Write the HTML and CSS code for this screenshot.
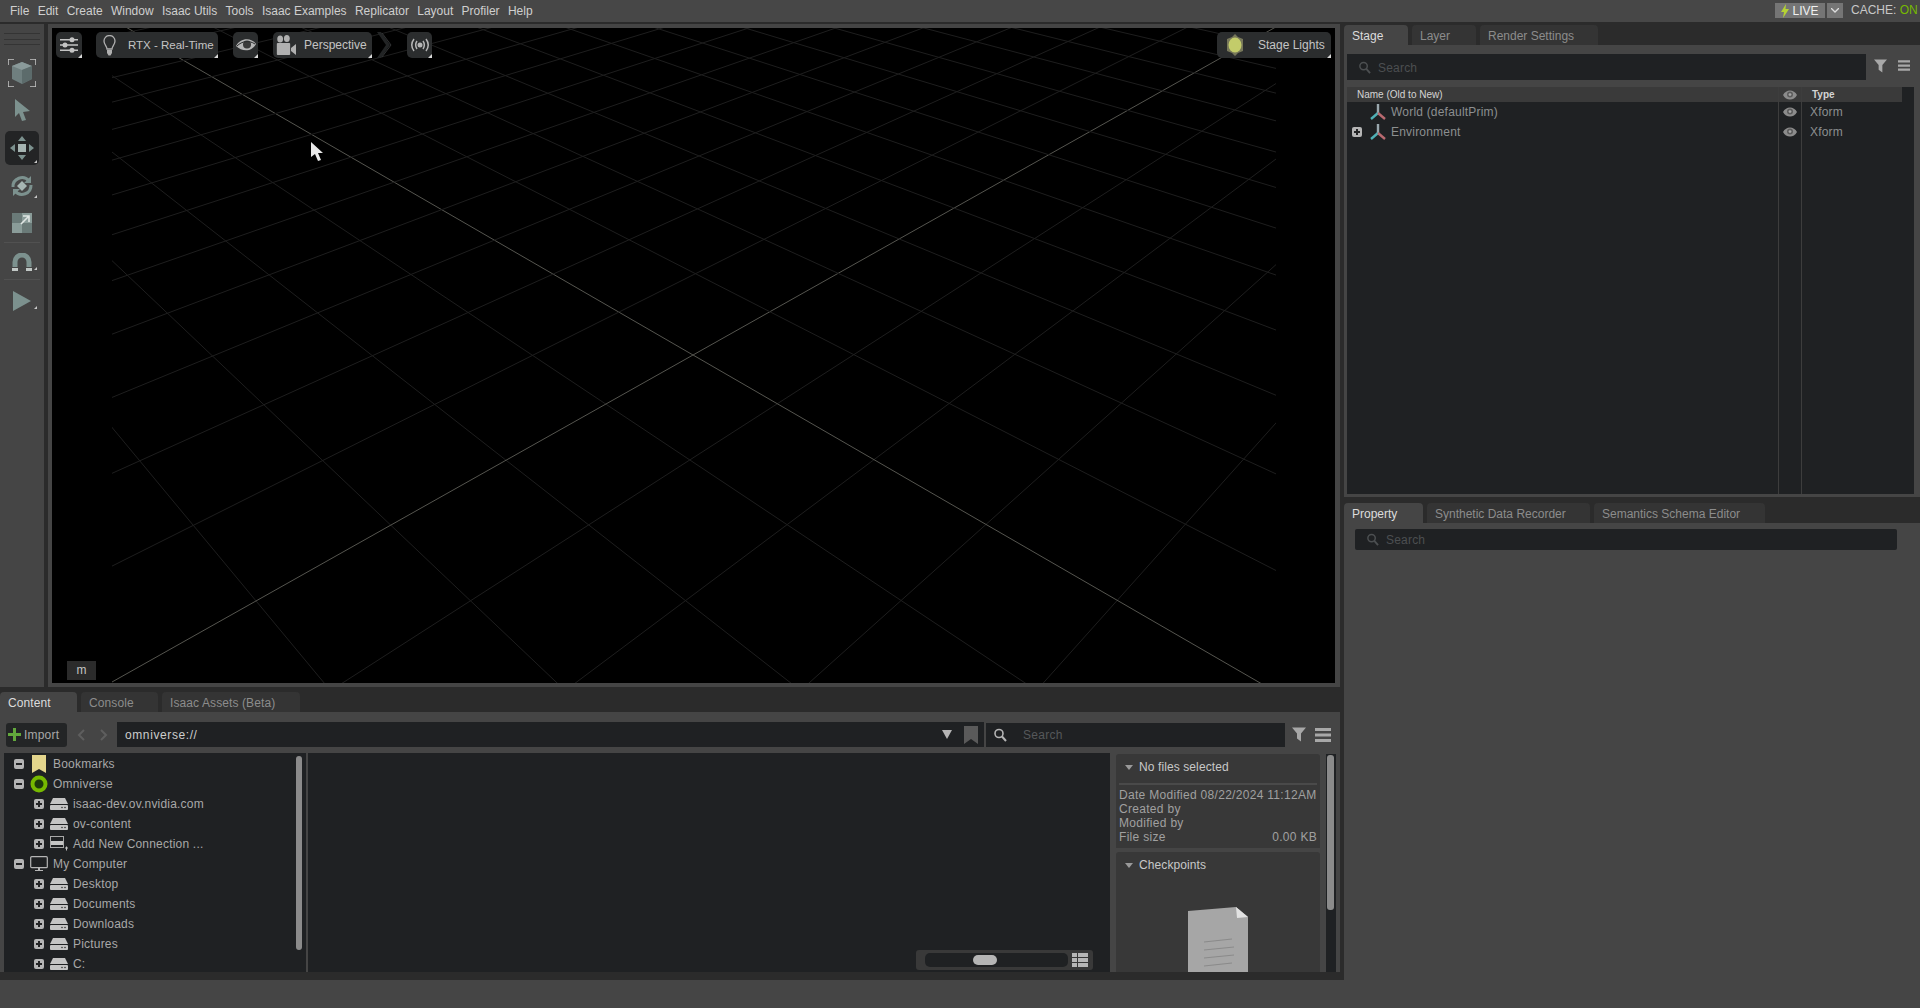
FILE: index.html
```html
<!DOCTYPE html>
<html lang="en">
<head>
  <meta charset="UTF-8">
  <title>Isaac Sim</title>
  <link rel="stylesheet" href="styles.css">
</head>
<body>
  <svg class="defs" width="0" height="0">
    <symbol id="i-drive" viewBox="0 0 18 12">
      <path d="M3 0h12l3 6H0z" fill="#c4c4c4"/>
      <rect y="7" width="18" height="5" rx="1" fill="#c4c4c4"/>
      <circle cx="12" cy="9.5" r=".8" fill="#333"/><circle cx="15" cy="9.5" r=".8" fill="#333"/>
    </symbol>
    <symbol id="i-xform" viewBox="0 0 16 18">
      <path d="M8 1v9" stroke="#9aa7ad" stroke-width="2.4" fill="none"/>
      <path d="M8 10l-7 6" stroke="#4fb0b5" stroke-width="2.4" fill="none"/>
      <path d="M8 10l7 6" stroke="#b8696f" stroke-width="2.4" fill="none"/>
    </symbol>
    <symbol id="i-eye" viewBox="0 0 14 12">
      <path d="M0 6c3-6 11-6 14 0-3 6-11 6-14 0z" fill="#8c8c8c"/>
      <circle cx="7" cy="5.6" r="3" fill="#5c5c5c"/>
      <circle cx="7" cy="5.6" r="1.4" fill="#a5a5a5"/>
    </symbol>
    <symbol id="i-search" viewBox="0 0 14 14">
      <circle cx="6" cy="5.5" r="4" fill="none" stroke="currentColor" stroke-width="1.6"/>
      <path d="M9 8.5l4 4.5" stroke="currentColor" stroke-width="2"/>
    </symbol>
    <symbol id="i-filter" viewBox="0 0 14 14">
      <path d="M0 0h14L9 6v8L5 11V6z" fill="#a8a8a8"/>
    </symbol>
    <symbol id="i-menu" viewBox="0 0 16 14">
      <path d="M0 0h16v3H0zM0 5.5h16v3H0zM0 11h16v3H0z" fill="#a8a8a8"/>
    </symbol>
  </svg>

  <div class="app">
    <header class="menubar">
      <nav class="menu">
        <span>File</span><span>Edit</span><span>Create</span><span>Window</span><span>Isaac Utils</span><span>Tools</span><span>Isaac Examples</span><span>Replicator</span><span>Layout</span><span>Profiler</span><span>Help</span>
      </nav>
      <div class="live-status">
        <div class="live-btn">
          <svg width="8" height="14" viewBox="0 0 8 14"><path d="M5 0L0 8h3l-1 6 6-9H4.500z" fill="#b5d334"/></svg>
          <span>LIVE</span>
        </div>
        <div class="live-drop">
          <svg width="8" height="5" viewBox="0 0 8 5"><path d="M0 0l4 4 4-4" fill="none" stroke="#ddd" stroke-width="1.300"/></svg>
        </div>
        <div class="cache">CACHE: <span class="on">ON</span></div>
      </div>
    </header>

    <div class="workspace">
      <div class="left-col">
        <div class="viewport-row">
          <aside class="toolbar">
            <div class="grip"></div>
            <div class="tool tool-select">
              <svg width="28" height="28" viewBox="0 0 28 28">
                <path d="M0 6V0h6M22 0h6v6M0 22v6h6M22 28h6v-6" fill="none" stroke="#c6c6c6" stroke-width="1.500"/>
                <path d="M14 3l10 4v13l-10 5-10-5V7z" fill="#6f7f7f"/>
                <path d="M14 3l10 4-10 4-10-4z" fill="#8a9a9a"/>
                <path d="M14 11l10-4v13l-10 5z" fill="#5c6b6b"/>
              </svg>
            </div>
            <div class="tool tool-arrow">
              <svg width="17" height="22" viewBox="0 0 17 22"><path d="M1 0l15 12-7 1 3 8-4 1-3-8-4 4z" fill="#7c918e"/></svg>
            </div>
            <div class="tool tool-move">
              <svg width="24" height="24" viewBox="0 0 24 24" fill="#7c918e">
                <rect x="8" y="8" width="8" height="8" fill="#a6b5b2"/>
                <path d="M12 0l4 5H8zM12 24l-4-5h8zM0 12l5-4v8zM24 12l-5 4V8z"/>
              </svg>
            </div>
            <div class="tool tool-rotate">
              <svg width="24" height="24" viewBox="0 0 24 24">
                <path d="M3 13a9 9 0 0 1 16-6M21 11a9 9 0 0 1-16 6" fill="none" stroke="#7c918e" stroke-width="3"/>
                <path d="M21 2v7h-7zM3 22v-7h7z" fill="#7c918e"/>
                <path d="M12 7l5 5-5 5-5-5z" fill="#a6b5b2"/>
              </svg>
            </div>
            <div class="tool tool-scale">
              <svg width="20" height="20" viewBox="0 0 20 20">
                <rect width="20" height="20" fill="#8a9c99"/>
                <rect width="10" height="10" fill="#6a7a78"/>
                <rect x="10" y="10" width="10" height="10" fill="#6a7a78"/>
                <path d="M9 11l8-8M11 3h6v6" fill="none" stroke="#e0e6e4" stroke-width="1.600"/>
              </svg>
            </div>
            <div class="tool-sep"></div>
            <div class="tool tool-magnet">
              <svg width="20" height="19" viewBox="0 0 20 19">
                <path d="M3 14V9a7 7 0 0 1 14 0v5" fill="none" stroke="#7c918e" stroke-width="5"/>
                <path d="M0 15h6v3H0zM14 15h6v3h-6z" fill="#c2c8c6"/>
              </svg>
            </div>
            <div class="tool-sep"></div>
            <div class="tool tool-play">
              <svg width="18" height="20" viewBox="0 0 18 20"><path d="M0 0l18 10L0 20z" fill="#7c918e"/></svg>
            </div>
          </aside>

          <div class="viewport-frame">
            <main class="viewport">
              <svg id="grid" class="grid" viewBox="52 28 1283 655">
                <clipPath id="grid-clip"><rect x="112" y="28" width="1164" height="655"/></clipPath>
                <g id="grid-lines" clip-path="url(#grid-clip)"></g>
              </svg>

              <div class="vp-toolbar">
                <div class="vp-btn vp-settings">
                  <svg width="18" height="16" viewBox="0 0 18 16" fill="#c4c4c4">
                    <path d="M0 2h18v1.600H0zM0 7.200h18v1.600H0zM0 12.400h18V14H0z"/>
                    <circle cx="12" cy="2.800" r="2.500"/><circle cx="5" cy="8" r="2.500"/><circle cx="12" cy="13.200" r="2.500"/>
                  </svg>
                </div>
                <div class="vp-btn vp-rtx">
                  <svg width="13" height="21" viewBox="0 0 13 21">
                    <path d="M4 14c0-3-3-4-3-8a5.500 5.500 0 0 1 11 0c0 4-3 5-3 8z" fill="none" stroke="#b0b0b0" stroke-width="1.300"/>
                    <path d="M4 15h5v3l-1.500 2.500h-2L4 18z" fill="#b0b0b0"/>
                  </svg>
                  <span>RTX - Real-Time</span>
                </div>
                <div class="vp-btn vp-eye">
                  <svg width="20" height="14" viewBox="0 0 20 14">
                    <path d="M0 8C4 0 15-1 20 6 16 14 6 14 0 8z" fill="#b5b5b5"/>
                    <circle cx="11" cy="6.500" r="4" fill="#3a3a3a"/>
                    <path d="M1 8c5-5 12-6 18-2" stroke="#2b2d2e" stroke-width="1" fill="none"/>
                  </svg>
                </div>
                <div class="vp-btn vp-persp">
                  <svg width="20" height="20" viewBox="0 0 24 20" preserveAspectRatio="none" fill="#b0b0b0">
                    <circle cx="5" cy="4" r="3.500"/><circle cx="13" cy="3.500" r="3.500"/>
                    <rect x="1" y="8" width="16" height="12" rx="1"/>
                    <path d="M18 13l6-4v11l-6-4z"/>
                  </svg>
                  <span>Perspective</span>
                </div>
                <svg class="vp-chevron" width="15" height="26" viewBox="0 0 15 26">
                  <path d="M0 0h4l9 13-9 13H0l9-13z" fill="#222425"/>
                  <path d="M5 1l9 12-9 12" fill="none" stroke="#333536"/>
                </svg>
                <div class="vp-btn vp-cast">
                  <svg width="22" height="14" viewBox="0 0 22 14" fill="none" stroke="#b5b5b5" stroke-width="1.500">
                    <path d="M5 1C2 5 2 9 5 13M8 3c-2 3-2 5 0 8M17 1c3 4 3 8 0 12M14 3c2 3 2 5 0 8"/>
                    <circle cx="11" cy="7" r="2.500" fill="#b5b5b5" stroke="none"/>
                  </svg>
                </div>
              </div>

              <div class="vp-btn vp-lights">
                <svg width="20" height="22" viewBox="0 0 20 22">
                  <path d="M10 0l3 3 5 2v12l-5 2-3 3-3-3-5-2V5l5-2z" fill="#77775a"/>
                  <ellipse cx="10" cy="11" rx="6.500" ry="7.500" fill="#c3cc6a"/>
                </svg>
                <span>Stage Lights</span>
              </div>

              <div class="vp-scale">m</div>

              <svg class="cursor" width="13" height="20" viewBox="0 0 13 20">
                <path d="M1 0v15l4-3 3 7 3-1-3-7h5z" fill="#e8e8e8"/>
              </svg>
            </main>
          </div>
        </div>

        <section class="content-panel">
          <div class="tabs tabs-content">
            <div class="tab active w-content">Content</div>
            <div class="tab w-console">Console</div>
            <div class="tab w-assets">Isaac Assets (Beta)</div>
          </div>
          <div class="content-body">
            <div class="content-bar">
              <div class="import-btn">
                <svg width="13" height="13" viewBox="0 0 13 13"><path d="M5 0h3v5h5v3H8v5H5V8H0V5h5z" fill="#62a83c"/></svg>
                <span>Import</span>
              </div>
              <div class="nav-arrows">
                <svg width="8" height="12" viewBox="0 0 8 12"><path d="M7 1L2 6l5 5" fill="none" stroke="#5e5e5e" stroke-width="2"/></svg>
                <svg width="8" height="12" viewBox="0 0 8 12"><path d="M1 1l5 5-5 5" fill="none" stroke="#5e5e5e" stroke-width="2"/></svg>
              </div>
              <div class="address">
                <span>omniverse://</span>
                <svg class="addr-drop" width="10" height="9" viewBox="0 0 10 9"><path d="M0 0h10L5 9z" fill="#b5b5b5"/></svg>
                <svg class="addr-mark" width="14" height="18" viewBox="0 0 14 18"><path d="M0 0h14v18l-7-5-7 5z" fill="#5a5a5a"/></svg>
              </div>
              <div class="content-search">
                <svg class="ic-search-lg" width="14" height="14"><use href="#i-search"/></svg>
                <span>Search</span>
              </div>
              <svg class="ic-filter" width="14" height="15"><use href="#i-filter"/></svg>
              <svg class="ic-menu" width="16" height="14"><use href="#i-menu"/></svg>
            </div>

            <div class="content-main">
              <div class="tree-pane">
                <div class="tree-row lvl1"><i class="exp minus"></i>
                  <svg class="tree-ic" width="18" height="18" viewBox="0 0 18 18"><path d="M2 0h14v18l-7-4-7 4z" fill="#e3d58c"/></svg>
                  <span>Bookmarks</span></div>
                <div class="tree-row lvl1"><i class="exp minus"></i>
                  <svg class="tree-ic" width="18" height="18" viewBox="0 0 18 18"><circle cx="9" cy="9" r="6.500" fill="#1d3a0c" stroke="#76b900" stroke-width="4"/></svg>
                  <span>Omniverse</span></div>
                <div class="tree-row lvl2"><i class="exp plus"></i><svg class="tree-ic" width="18" height="12"><use href="#i-drive"/></svg><span>isaac-dev.ov.nvidia.com</span></div>
                <div class="tree-row lvl2"><i class="exp plus"></i><svg class="tree-ic" width="18" height="12"><use href="#i-drive"/></svg><span>ov-content</span></div>
                <div class="tree-row lvl2"><i class="exp plus"></i>
                  <svg class="tree-ic" width="18" height="16" viewBox="0 0 18 16">
                    <rect x=".5" y=".5" width="13" height="11" fill="none" stroke="#a8a8a8"/>
                    <rect x="1" y="5" width="12" height="4" fill="#c4c4c4"/>
                    <path d="M15 12h3M16.500 10.500v4" stroke="#c4c4c4"/>
                  </svg>
                  <span>Add New Connection ...</span></div>
                <div class="tree-row lvl1"><i class="exp minus"></i>
                  <svg class="tree-ic" width="18" height="16" viewBox="0 0 18 16">
                    <rect x=".7" y=".7" width="16.600" height="11" rx="1" fill="none" stroke="#b5b5b5" stroke-width="1.200"/>
                    <path d="M8 12h2v2h3v1H5v-1h3z" fill="#b5b5b5"/>
                  </svg>
                  <span>My Computer</span></div>
                <div class="tree-row lvl2"><i class="exp plus"></i><svg class="tree-ic" width="18" height="12"><use href="#i-drive"/></svg><span>Desktop</span></div>
                <div class="tree-row lvl2"><i class="exp plus"></i><svg class="tree-ic" width="18" height="12"><use href="#i-drive"/></svg><span>Documents</span></div>
                <div class="tree-row lvl2"><i class="exp plus"></i><svg class="tree-ic" width="18" height="12"><use href="#i-drive"/></svg><span>Downloads</span></div>
                <div class="tree-row lvl2"><i class="exp plus"></i><svg class="tree-ic" width="18" height="12"><use href="#i-drive"/></svg><span>Pictures</span></div>
                <div class="tree-row lvl2"><i class="exp plus"></i><svg class="tree-ic" width="18" height="12"><use href="#i-drive"/></svg><span>C:</span></div>
                <div class="scrollbar tree-scroll"></div>
              </div>

              <div class="file-pane">
                <div class="zoom-bar">
                  <div class="zoom-track"><div class="zoom-thumb"></div></div>
                  <svg width="16" height="14" viewBox="0 0 16 14" fill="#b8b8b8">
                    <path d="M0 0h5v4H0zM6 0h10v4H6zM0 5h5v4H0zM6 5h10v4H6zM0 10h5v4H0zM6 10h10v4H6z"/>
                  </svg>
                </div>
              </div>

              <div class="detail-pane">
                <div class="detail-sections">
                  <div class="detail-card card-info">
                    <div class="card-head"><i class="tri"></i>No files selected</div>
                    <div class="card-rule"></div>
                    <div class="info-line">Date Modified 08/22/2024 11:12AM</div>
                    <div class="info-line">Created by</div>
                    <div class="info-line">Modified by</div>
                    <div class="info-line split"><span>File size</span><span>0.00 KB</span></div>
                  </div>
                  <div class="detail-card card-check">
                    <div class="card-head"><i class="tri"></i>Checkpoints</div>
                    <svg class="doc-ic" width="60" height="80" viewBox="0 0 60 80">
                      <path d="M0 4l48-4 12 10v70H0z" fill="#a6a6a6"/>
                      <path d="M48 0l12 10-11 1z" fill="#e2e2e2"/>
                      <path d="M16 35l28-3M16 43l30-3M16 51l30-3M16 59l28-3" stroke="#8a8a8a" stroke-width="1.200"/>
                    </svg>
                  </div>
                </div>
                <div class="detail-track"><div class="scrollbar detail-scroll"></div></div>
              </div>
            </div>
          </div>
        </section>
      </div>

      <div class="right-col">
        <div class="tabs tabs-stage">
          <div class="tab active w-stage">Stage</div>
          <div class="tab w-layer">Layer</div>
          <div class="tab w-render">Render Settings</div>
        </div>
        <section class="stage-panel">
          <div class="stage-search-row">
            <div class="search-field stage-search">
              <svg width="13" height="13"><use href="#i-search"/></svg>
              <span>Search</span>
            </div>
            <svg class="ic-filter" width="13" height="14"><use href="#i-filter"/></svg>
            <svg class="ic-menu" width="12" height="11"><use href="#i-menu"/></svg>
          </div>
          <div class="stage-table">
            <div class="col col-name">
              <div class="col-head">Name (Old to New)</div>
              <div class="prim"><svg width="16" height="18"><use href="#i-xform"/></svg><span>World (defaultPrim)</span></div>
              <div class="prim"><i class="exp plus stage-exp"></i><svg width="16" height="18"><use href="#i-xform"/></svg><span>Environment</span></div>
            </div>
            <div class="col col-eye">
              <div class="col-head"><svg width="14" height="12"><use href="#i-eye"/></svg></div>
              <div class="prim"><svg width="14" height="12"><use href="#i-eye"/></svg></div>
              <div class="prim"><svg width="14" height="12"><use href="#i-eye"/></svg></div>
            </div>
            <div class="col col-type">
              <div class="col-head">Type</div>
              <div class="prim">Xform</div>
              <div class="prim">Xform</div>
            </div>
          </div>
        </section>
        <div class="tabs tabs-prop">
          <div class="tab active w-prop">Property</div>
          <div class="tab w-synth">Synthetic Data Recorder</div>
          <div class="tab w-schema">Semantics Schema Editor</div>
        </div>
        <section class="prop-panel">
          <div class="search-field prop-search">
            <svg width="13" height="13"><use href="#i-search"/></svg>
            <span>Search</span>
          </div>
        </section>
      </div>
    </div>

    <footer class="statusbar"></footer>
  </div>
  <script src="grid.js"></script>
</body>
</html>
```

FILE: styles.css
```css
* {
  box-sizing: border-box;
}

body {
  margin: 0;
  height: 100vh;
  overflow: hidden;
  background: #454545;
  font-family: "Liberation Sans", Arial, sans-serif;
  font-size: 12px;
  color: #a8a8a8;
}

.defs {
  display: block;
  height: 0;
}

.app {
  height: 1008px;
  display: flex;
  flex-direction: column;
}

/* menu */
.menubar {
  height: 22px;
  flex: none;
  display: flex;
  justify-content: space-between;
  background: #474747;
  color: #cfcfcf;
}

.menu {
  display: flex;
  align-items: center;
  gap: 8.3px;
  padding-left: 10px;
}

.live-status {
  display: flex;
  align-items: flex-start;
  padding-top: 3px;
}

.live-btn {
  width: 50px;
  height: 15px;
  display: flex;
  align-items: center;
  justify-content: center;
  gap: 3px;
  background: #757575;
  color: #f0f0f0;
}

.live-drop {
  width: 16px;
  height: 15px;
  margin-left: 2px;
  display: flex;
  align-items: center;
  justify-content: center;
  background: #757575;
}

.cache {
  width: 69px;
  margin-left: 8px;
  line-height: 15px;
  color: #c8c8c8;
  white-space: nowrap;
}

.on {
  color: #76b900;
}

/* main layout */
.workspace {
  height: 958px;
  flex: none;
  display: flex;
  background: #2b2b2b;
}

.left-col {
  width: 1340px;
  flex: none;
  margin-right: 4px;
}

.right-col {
  flex: 1;
  display: flex;
  flex-direction: column;
}

.statusbar {
  flex: 1;
  background: #454545;
}

.viewport-row {
  height: 665px;
  padding-top: 2px;
  display: flex;
}

/* left toolbar */
.toolbar {
  width: 44px;
  flex: none;
  margin-right: 4px;
  display: flex;
  flex-direction: column;
  align-items: center;
  background: #454545;
}

.grip {
  width: 36px;
  height: 12px;
  margin: 9px 0 14px;
  border-top: 1px solid #343434;
  border-bottom: 1px solid #343434;
  background: linear-gradient(#343434, #343434) center / 100% 1px no-repeat;
}

.tool {
  position: relative;
  display: flex;
  align-items: center;
  justify-content: center;
  width: 34px;
  flex: none;
}

.tool::after {
  content: "";
  position: absolute;
  right: 2px;
  bottom: 2px;
  border-style: solid;
  border-width: 0 0 3px 3px;
  border-color: transparent transparent #c8c8c8 transparent;
}

.tool-select {
  height: 28px;
}

.tool-arrow {
  height: 24px;
  margin-top: 11px;
}

.tool-move {
  height: 34px;
  margin-top: 9px;
  background: #232425;
  border-radius: 5px;
}

.tool-rotate {
  height: 28px;
  margin-top: 7px;
}

.tool-scale {
  height: 24px;
  margin-top: 11px;
}

.tool-magnet {
  height: 20px;
  margin-top: 9px;
}

.tool-play {
  height: 20px;
  margin-top: 11px;
}

.tool-arrow::after,
.tool-select::after,
.tool-scale::after {
  display: none;
}

.tool-sep {
  width: 36px;
  height: 1px;
  margin-top: 7px;
  background: #515151;
}

/* viewport */
.viewport-frame {
  flex: 1;
  padding: 4px 5px 4px 4px;
  background: #454545;
}

.viewport {
  position: relative;
  height: 100%;
  background: #000;
  overflow: hidden;
}

.grid {
  position: absolute;
  inset: 0;
  width: 100%;
  height: 100%;
}

.vp-toolbar {
  position: absolute;
  top: 4px;
  left: 4px;
  display: flex;
  align-items: center;
}

.vp-btn {
  position: relative;
  height: 26px;
  display: flex;
  align-items: center;
  background: #2b2d2e;
  border-radius: 5px;
  color: #c4c4c4;
  white-space: nowrap;
}

.vp-btn::after {
  content: "";
  position: absolute;
  right: 0;
  bottom: 0;
  border-style: solid;
  border-width: 0 0 4px 4px;
  border-color: transparent transparent #d8d8d8 transparent;
}

.vp-settings {
  width: 26px;
  justify-content: center;
}

.vp-rtx {
  width: 122px;
  margin-left: 14px;
  padding-left: 7px;
  gap: 12px;
  font-size: 11.5px;
}

.vp-eye {
  width: 25px;
  margin-left: 15px;
  justify-content: center;
}

.vp-persp {
  width: 99px;
  margin-left: 15px;
  padding-left: 3px;
  gap: 8px;
}

.vp-chevron {
  margin-left: 5px;
}

.vp-cast {
  width: 25px;
  margin-left: 15px;
  justify-content: center;
}

.vp-lights {
  position: absolute;
  top: 4px;
  right: 4px;
  width: 114px;
  padding-left: 8px;
  gap: 13px;
}

.vp-scale {
  position: absolute;
  left: 15px;
  bottom: 3px;
  width: 29px;
  height: 19px;
  background: #2b2b2b;
  color: #c4c4c4;
  text-align: center;
  line-height: 19px;
}

.cursor {
  position: absolute;
  left: 258px;
  top: 114px;
}

/* tabs */
.tabs {
  display: flex;
  flex: none;
  height: 20px;
  gap: 4px;
}

.tab {
  height: 20px;
  padding-left: 8px;
  line-height: 22px;
  background: #343434;
  border-radius: 4px 4px 0 0;
  color: #8c8c8c;
  white-space: nowrap;
}

.tab.active {
  background: #454545;
  color: #dcdcdc;
}

.tabs-stage {
  margin-top: 3px;
}

.tabs-prop {
  margin-top: 6px;
}

.w-content { width: 77px; }
.w-console { width: 77px; }
.w-assets { width: 138px; }
.w-stage { width: 64px; }
.w-layer { width: 64px; }
.w-render { width: 118px; }
.w-prop { width: 79px; }
.w-synth { width: 163px; }
.w-schema { width: 171px; }

.tabs-content {
  margin-top: 5px;
}

.tabs-content .tab {
  letter-spacing: .1px;
}

/* content browser */
.content-panel {
  height: 285px;
  display: flex;
  flex-direction: column;
}

.content-body {
  flex: 1;
  display: flex;
  flex-direction: column;
  background: #454545;
  padding: 10px 4px 0 4px;
}

.content-bar {
  height: 25px;
  flex: none;
  display: flex;
  align-items: center;
}

.import-btn {
  width: 61px;
  height: 24px;
  margin-left: 2px;
  padding-left: 2px;
  display: flex;
  align-items: center;
  gap: 3px;
  background: #232526;
  border-radius: 3px;
  color: #a8a8a8;
  letter-spacing: .2px;
}

.nav-arrows {
  width: 50px;
  flex: none;
  display: flex;
  justify-content: center;
  gap: 15px;
}

.address {
  width: 867px;
  height: 25px;
  padding: 0 8px;
  display: flex;
  align-items: center;
  background: #1f2123;
  color: #cdcdcd;
  letter-spacing: .6px;
}

.addr-drop {
  margin-left: auto;
  margin-right: 12px;
}

.addr-mark {
  margin-right: -2px;
}

.content-search {
  width: 299px;
  height: 24px;
  margin-left: 2px;
  padding-left: 7px;
  display: flex;
  align-items: center;
  gap: 16px;
  background: #1f2123;
  color: #55585a;
  letter-spacing: .3px;
}

.ic-search-lg {
  color: #b5b5b5;
}

.content-bar .ic-filter {
  margin-left: 7px;
}

.content-bar .ic-menu {
  margin-left: 9px;
}

.content-main {
  height: 219px;
  margin-top: 6px;
  display: flex;
}

.tree-pane {
  position: relative;
  width: 302px;
  flex: none;
  padding-top: 1px;
  background: #1f2123;
  overflow: hidden;
  letter-spacing: .2px;
}

.tree-row {
  height: 20px;
  display: flex;
  align-items: center;
  white-space: nowrap;
}

.lvl1 {
  padding-left: 10px;
}

.lvl2 {
  padding-left: 30px;
}

.tree-ic {
  flex: none;
  margin: 0 5px 0 6px;
}

.exp {
  position: relative;
  display: block;
  width: 10px;
  height: 10px;
  flex: none;
  background: #b5b5b5;
  border-radius: 2px;
}

.exp::before {
  content: "";
  position: absolute;
  left: 2px;
  right: 2px;
  top: 4px;
  height: 2px;
  background: #232425;
}

.exp.plus::after {
  content: "";
  position: absolute;
  top: 2px;
  bottom: 2px;
  left: 4px;
  width: 2px;
  background: #232425;
}

.scrollbar {
  background: #8b8b8b;
  border-radius: 3px;
}

.tree-scroll {
  position: absolute;
  right: 4px;
  top: 3px;
  width: 6px;
  height: 194px;
}

.file-pane {
  position: relative;
  width: 802px;
  flex: none;
  margin-left: 2px;
  background: #1f2123;
}

.zoom-bar {
  position: absolute;
  right: 17px;
  bottom: 2px;
  width: 177px;
  height: 20px;
  padding: 0 5px 0 9px;
  display: flex;
  align-items: center;
  gap: 4px;
  background: #393939;
  border-radius: 3px;
}

.zoom-track {
  width: 143px;
  height: 14px;
  padding-left: 48px;
  display: flex;
  align-items: center;
  background: #1f2123;
  border-radius: 5px;
}

.zoom-thumb {
  width: 24px;
  height: 10px;
  background: #b5b5b5;
  border-radius: 5px;
}

.detail-pane {
  flex: 1;
  margin-left: 6px;
  padding-top: 1px;
  display: flex;
  gap: 6px;
  min-width: 0;
}

.detail-sections {
  width: 204px;
  flex: none;
  display: flex;
  flex-direction: column;
  gap: 4px;
}

.detail-card {
  background: #383838;
  border-radius: 3px 3px 0 0;
  overflow: hidden;
  letter-spacing: .3px;
}

.card-info {
  height: 94px;
  padding: 0 3px;
}

.card-check {
  flex: 1;
  text-align: center;
  padding: 0 3px;
}

.card-head {
  height: 26px;
  display: flex;
  align-items: center;
  gap: 6px;
  padding-left: 6px;
  color: #c8c8c8;
  text-align: left;
  letter-spacing: .1px;
}

.tri {
  width: 0;
  height: 0;
  border-style: solid;
  border-width: 5px 4px 0 4px;
  border-color: #9a9a9a transparent transparent transparent;
}

.card-rule {
  height: 2px;
  margin: 3px 0 3px;
  background: #4a4a4a;
}

.info-line {
  height: 14px;
  line-height: 14px;
  white-space: nowrap;
  color: #a0a0a0;
}

.split {
  display: flex;
  justify-content: space-between;
}

.doc-ic {
  display: block;
  margin: 29px auto 0;
}

.detail-track {
  width: 10px;
  flex: none;
  padding: 1px 2px 0 1px;
  background: #1f2123;
}

.detail-scroll {
  height: 155px;
}

/* stage */
.stage-panel {
  height: 452px;
  flex: none;
  padding: 9px 6px 3px 3px;
  display: flex;
  flex-direction: column;
  background: #454545;
}

.stage-search-row {
  height: 26px;
  flex: none;
  display: flex;
  align-items: flex-start;
}

.search-field {
  display: flex;
  align-items: center;
  gap: 7px;
  background: #1f2123;
  color: #4c4f51;
  letter-spacing: .2px;
}

.stage-search {
  width: 519px;
  height: 26px;
  padding: 1px 0 0 11px;
}

.stage-search-row .ic-filter {
  margin: 5px 0 0 8px;
}

.stage-search-row .ic-menu {
  margin: 6px 0 0 11px;
}

.stage-table {
  flex: 1;
  margin-top: 7px;
  display: flex;
}

.col {
  background: #1f2123;
}

.col-name {
  width: 431px;
  flex: none;
}

.col-eye {
  width: 24px;
  flex: none;
  border-left: 1px solid #3d3d3d;
  border-right: 1px solid #3d3d3d;
}

.col-type {
  flex: 1;
}

.col-head {
  height: 15px;
  background: #3a3a3a;
  color: #d4d4d4;
  font-size: 10px;
  line-height: 16px;
}

.col-name .col-head {
  padding-left: 10px;
}

.col-eye .col-head,
.col-eye .prim {
  justify-content: center;
  padding: 0;
}

.col-eye .col-head {
  display: flex;
  align-items: center;
}

.col-type .col-head {
  width: 100px;
  padding-left: 10px;
  font-weight: bold;
}

.prim {
  height: 20px;
  padding-left: 23px;
  display: flex;
  align-items: center;
  gap: 5px;
  color: #8c8f90;
  letter-spacing: .2px;
  position: relative;
}

.col-type .prim {
  padding-left: 8px;
}

.stage-exp {
  position: absolute;
  left: 5px;
  top: 5px;
}

/* property */
.prop-panel {
  flex: 1;
  padding: 6px 23px 0 11px;
  background: #454545;
}

.prop-search {
  height: 21px;
  padding-left: 11px;
  border-radius: 2px;
}
```

FILE: grid.js
```js
// floor grid, two families of lines running to their vanishing points
var VA = [-540, -358];
var VB = [1990, -375];
var O = [693, 355];
var A = 0.064;
var B = 0.063;

var group = document.getElementById('grid-lines');

function addLine(from, through, main) {
  var line = document.createElementNS('http://www.w3.org/2000/svg', 'line');
  line.setAttribute('x1', from[0]);
  line.setAttribute('y1', from[1]);
  line.setAttribute('x2', from[0] + (through[0] - from[0]) * 4);
  line.setAttribute('y2', from[1] + (through[1] - from[1]) * 4);
  line.setAttribute('stroke', main ? '#55554f' : '#1e1e1e');
  group.appendChild(line);
}

function project(vp, weight) {
  return [
    (weight * vp[0] + O[0]) / (weight + 1),
    (weight * vp[1] + O[1]) / (weight + 1)
  ];
}

for (var k = -8; k <= 26; k++) {
  addLine(VB, project(VA, A * k), k === 0);
  addLine(VA, project(VB, B * k), k === 0);
}
```
